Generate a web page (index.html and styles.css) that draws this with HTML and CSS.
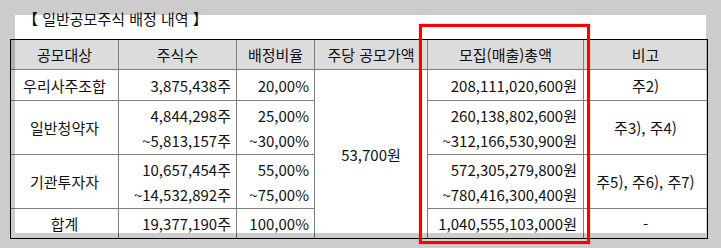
FILE: index.html
```html
<!DOCTYPE html>
<html lang="ko">
<head>
<meta charset="utf-8">
<link rel="stylesheet" href="styles.css">
</head>
<body>
<div class="page">
  <div class="title">【 일반공모주식 배정 내역 】</div>
  <table class="alloc">
    <colgroup>
      <col class="c1"><col class="c2"><col class="c3"><col class="c4"><col class="c5"><col class="c6">
    </colgroup>
    <thead>
      <tr class="row-h">
        <th>공모대상</th><th>주식수</th><th>배정비율</th><th>주당 공모가액</th><th>모집(매출)총액</th><th class="last">비고</th>
      </tr>
    </thead>
    <tbody>
      <tr class="row-1">
        <td class="c">우리사주조합</td>
        <td class="n">3,875,438주</td>
        <td class="n">20,00%</td>
        <td class="c price" rowspan="4">53,700원</td>
        <td class="n m">208,111,020,600원</td>
        <td class="c last">주2)</td>
      </tr>
      <tr class="row-2">
        <td class="c">일반청약자</td>
        <td class="n">4,844,298주<br>~5,813,157주</td>
        <td class="n">25,00%<br>~30,00%</td>
        <td class="n m">260,138,802,600원<br>~312,166,530,900원</td>
        <td class="c last">주3), 주4)</td>
      </tr>
      <tr class="row-2">
        <td class="c">기관투자자</td>
        <td class="n">10,657,454주<br>~14,532,892주</td>
        <td class="n">55,00%<br>~75,00%</td>
        <td class="n m">572,305,279,800원<br>~780,416,300,400원</td>
        <td class="c last">주5), 주6), 주7)</td>
      </tr>
      <tr class="row-t">
        <td class="c">합계</td>
        <td class="n">19,377,190주</td>
        <td class="n">100,00%</td>
        <td class="n m">1,040,555,103,000원</td>
        <td class="c last">-</td>
      </tr>
    </tbody>
  </table>
  <div class="dim"></div>
  <div class="mark"></div>
</div>
</body>
</html>
```
FILE: styles.css
```css
html, body {
  margin: 0;
  padding: 0;
}
body {
  width: 721px;
  height: 248px;
  overflow: hidden;
  background: #ffffff;
  font-family: "Noto Sans CJK KR", "Noto Sans", sans-serif;
  font-size: 15px;
  color: #111;
}
.page {
  position: relative;
  width: 721px;
  height: 248px;
  padding: 8px 0 0 10px;
  box-sizing: border-box;
}
.title {
  padding-left: 13px;
  line-height: 22px;
  height: 22px;
  margin-bottom: 9px;
  white-space: nowrap;
}
.alloc {
  border-collapse: separate;
  border-spacing: 0;
  border: 1px solid #000;
  table-layout: fixed;
  width: 698px;
}
.c1 { width: 108px; }
.c2 { width: 118px; }
.c3 { width: 78px; }
.c4 { width: 113px; }
.c5 { width: 156px; }
.c6 { width: 123px; }
.alloc th, .alloc td {
  box-sizing: border-box;
  padding: 0 5px 0 0;
  border-right: 1px solid #808080;
  border-bottom: 1px solid #808080;
  font-weight: normal;
  line-height: 25px;
  vertical-align: middle;
  white-space: nowrap;
  overflow: hidden;
}
.alloc th {
  background: #dcdcdc;
  text-align: center;
  padding: 0;
}
.alloc .last { border-right: 0; }
.alloc .c { text-align: center; padding: 0; }
.alloc .n { text-align: right; }
.alloc .n.m { padding-right: 6px; }
.alloc .price { border-bottom: 0; padding-top: 1px; }
.row-t td { border-bottom: 0; }
.row-h { height: 30px; }
.row-1 { height: 31px; }
.row-2 { height: 54px; }
.row-t { height: 29px; }
.dim {
  position: absolute;
  left: 15px;
  top: 15px;
  width: 691px;
  height: 218px;
  box-shadow: 0 0 0 900px rgba(0, 0, 0, 0.2);
  pointer-events: none;
}
.mark {
  position: absolute;
  left: 419px;
  top: 24px;
  width: 171px;
  height: 220px;
  box-sizing: border-box;
  border: 3px solid #ff0000;
  box-shadow: 0 0 1px rgba(255, 0, 0, 0.6);
}
```
